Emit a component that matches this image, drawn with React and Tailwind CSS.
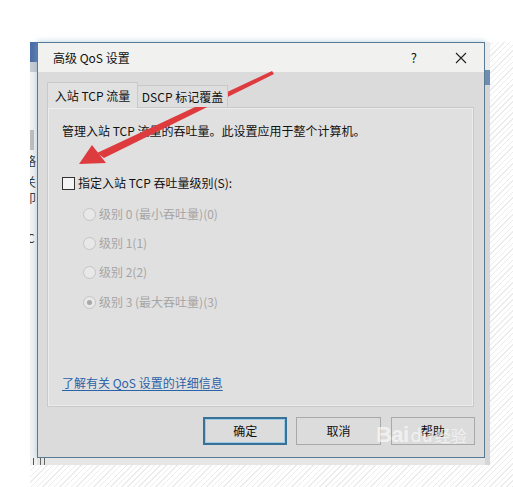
import React from 'react';

const font = { fontFamily: '"Noto Sans CJK SC", "Noto Sans", sans-serif' };

function Radio({ label, checked, top }) {
    return (
        <div className={`flex items-center h-[20px] ${top}`}>
            <span className="w-[13px] h-[13px] rounded-full border border-[#c4c4c4] bg-[#e8e8e8] flex items-center justify-center">
                {checked && <span className="w-[5px] h-[5px] rounded-full bg-[#a8a8a8]" />}
            </span>
            <span className="ml-[3px] text-[12px] text-[#a5a5a5]">{label}</span>
        </div>
    );
}

export default function App() {
    return (
        <div className="w-[513px] h-[487px] bg-white relative overflow-hidden" style={font}>
            <div className="pt-[42px] pl-[30px] h-full">
                <div className="h-full bg-[repeating-linear-gradient(135deg,#ffffff_0px,#ffffff_3px,#ececec_3px,#ececec_4px)]">
                    <div className="w-[460px] h-[423px] flex bg-[#f4f4f4]">
                        {/* window behind, left edge */}
                        <div className="w-[7px] flex flex-col overflow-hidden bg-[#f2f2f2] text-[12px] text-[#333] leading-none">
                            <div className="h-[20px] bg-[#4d6ea6]" />
                            <div className="h-[10px] bg-[#c8ccd2]" />
                            <div className="h-[20px] w-[4px] bg-[#bdbdbd] mt-[58px]" />
                            <span className="mt-[5px] -ml-[6px]">略</span>
                            <span className="mt-[9px] -ml-[6px]">关</span>
                            <span className="mt-[4px] -ml-[6px]">印</span>
                            <span className="mt-[28px] -ml-[3px]">C</span>
                            <div className="flex-1" />
                            <div className="h-[7px] flex gap-[2px] ml-[3px]">
                                <span className="w-[1px] bg-[#555]" />
                            </div>
                        </div>

                        <div className="flex flex-col">
                            {/* dialog */}
                            <div className="w-[448px] h-[416px] border border-[#587a92] flex flex-col shadow-[0_0_6px_rgba(120,170,200,0.6)]">
                                <div className="h-[29px] bg-[#f1f1f0] flex items-center pl-[15px] pr-[17px] text-[12px] text-[#111]">
                                    <span>高级 QoS 设置</span>
                                    <span className="ml-auto mr-[38px] text-[13px]">?</span>
                                    <svg width="12" height="12" viewBox="0 0 12 12" className="mt-[1px]">
                                        <path d="M1 1 L11 11 M11 1 L1 11" stroke="#222" strokeWidth="1.1" />
                                    </svg>
                                </div>
                                <div className="flex-1 bg-[#dcdbdb] px-[9px] pt-[10px] flex flex-col">
                                    <div className="flex items-end h-[25px] relative z-10">
                                        <div className="w-[91px] h-[26px] -mb-px border border-[#c9c9c9] border-b-0 bg-[#e2e1e1] flex items-center justify-center text-[12px] text-[#111]">
                                            入站 TCP 流量
                                        </div>
                                        <div className="w-[90px] h-[22px] border border-[#c9c9c9] border-b-0 border-l-0 bg-[#dedede] flex items-center justify-center text-[12px] text-[#111]">
                                            DSCP 标记覆盖
                                        </div>
                                    </div>
                                    <div className="w-[427px] h-[300px] border border-[#c9c9c9] bg-[#e1e0e0] shadow-[inset_0_0_0_1px_#ececec] px-[14px] pt-[14px] flex flex-col text-[12px] text-[#111]">
                                        <div className="h-[18px] flex items-center">
                                            管理入站 TCP 流量的吞吐量。此设置应用于整个计算机。
                                        </div>
                                        <div className="h-[20px] mt-[33px] flex items-center">
                                            <span className="w-[13px] h-[13px] border border-[#333] bg-[#f4f4f4]" />
                                            <span className="ml-[3px]">指定入站 TCP 吞吐量级别(S):</span>
                                        </div>
                                        <div className="pl-[21px] flex flex-col">
                                            <Radio label="级别 0 (最小吞吐量)(0)" top="mt-[11px]" />
                                            <Radio label="级别 1(1)" top="mt-[9px]" />
                                            <Radio label="级别 2(2)" top="mt-[9px]" />
                                            <Radio label="级别 3 (最大吞吐量)(3)" checked top="mt-[10px]" />
                                        </div>
                                        <a href="#" className="mt-[62px] h-[18px] flex items-center text-[#2a63a8] underline underline-offset-2 w-fit">
                                            了解有关 QoS 设置的详细信息
                                        </a>
                                    </div>
                                    <div className="flex mt-[10px] pl-[156px] gap-[9px] text-[12px] text-[#111]">
                                        <button className="w-[86px] h-[28px] border-2 border-[#3a7196] bg-[#dcdcdc] shadow-[inset_0_0_0_1px_#9ccbe6]">确定</button>
                                        <button className="w-[86px] h-[28px] border border-[#a9a9a9] bg-[#dcdcdc]">取消</button>
                                        <button className="w-[86px] h-[28px] border border-[#a9a9a9] bg-[#dcdcdc] ml-px">帮助</button>
                                    </div>
                                </div>
                            </div>
                            <div className="flex-1 bg-[#e6e6e6] flex gap-[3px] pl-[3px]">
                                <span className="w-[1px] bg-[#666]" />
                                <span className="w-[1px] bg-[#666]" />
                            </div>
                        </div>

                        {/* window behind, right edge */}
                        <div className="w-[5px] flex flex-col bg-[#dedede]">
                            <div className="h-[28px] bg-[#ececec]" />
                            <div className="h-[15px] bg-[#6f8db0]" />
                            <div className="flex-1 bg-[#d6d6d6]" />
                        </div>
                    </div>
                </div>
            </div>

            {/* annotation arrow */}
            <svg className="absolute left-0 top-0 pointer-events-none" width="513" height="487">
                <polygon points="272,71 274,74 104,158 97,153" fill="#de3b3f" />
                <polygon points="79,164 92,145 106,163" fill="#de3b3f" />
            </svg>

            {/* watermark */}
            <div className="absolute left-[376px] top-[418px] flex items-center text-white/60 pointer-events-none">
                <span className="text-[22px] font-bold tracking-tight" style={{ fontFamily: 'Arial, "Liberation Sans", sans-serif' }}>Bai</span>
                <span className="ml-[2px] text-[18px]">du</span>
                <span className="text-[16px] ml-[2px]">经验</span>
            </div>
        </div>
    );
}
